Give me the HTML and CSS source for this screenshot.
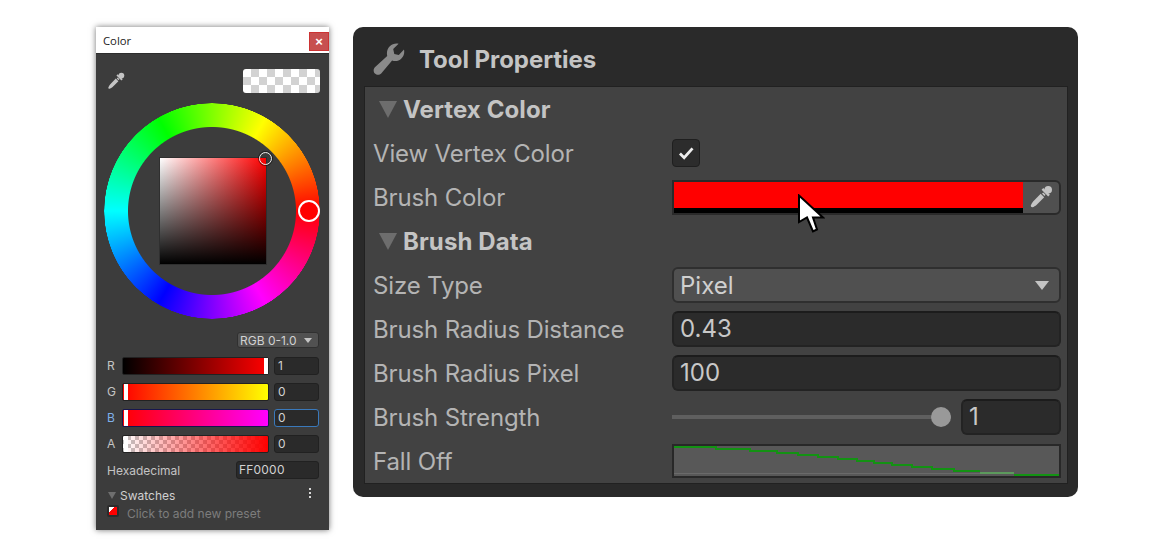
FILE: index.html
```html
<!DOCTYPE html>
<html lang="en">
<head>
<meta charset="utf-8">
<title>Color and Tool Properties</title>
<link rel="stylesheet" href="styles.css">
</head>
<body>
<svg class="defs" width="0" height="0" aria-hidden="true">
  <symbol id="dropper" viewBox="0 0 24 24">
    <circle cx="19.200" cy="4.800" r="3.800" fill="currentColor"/>
    <path d="M12.600 4.800l1.700-1.700 6.600 6.600-1.700 1.700z" fill="currentColor"/>
    <path d="M14.200 7.400l2.400 2.400-1.200 1.200-2.400-2.400z" fill="currentColor"/>
    <path d="M11.700 8.800l3.500 3.500-7.700 7.700c-1.100 1.100-2.600 1.800-4 2.300-.9.300-2-.8-1.700-1.700.5-1.400 1.200-2.900 2.300-4z" fill="currentColor"/>
  </symbol>
</svg>

<section class="win">
  <header class="win-title"><span>Color</span><button class="win-close">×</button></header>
  <div class="win-body">
    <div class="top">
      <svg class="dropper-s"><use href="#dropper"/></svg>
      <div class="preview"></div>
    </div>
    <div class="wheel-wrap">
      <div class="wheel"></div>
      <div class="sv"></div>
      <div class="thumb-sv"></div>
      <div class="thumb-hue"></div>
    </div>
    <div class="mode-row"><div class="mode"><span>RGB 0-1.0</span><i class="tri-s"></i></div></div>
    <div class="chan"><span class="chan-l">R</span><div class="bar bar-r"><i class="handle handle-end"></i></div><div class="num">1</div></div>
    <div class="chan"><span class="chan-l">G</span><div class="bar bar-g"><i class="handle"></i></div><div class="num">0</div></div>
    <div class="chan chan-on"><span class="chan-l">B</span><div class="bar bar-b"><i class="handle"></i></div><div class="num">0</div></div>
    <div class="chan"><span class="chan-l">A</span><div class="bar bar-a"><i class="handle"></i></div><div class="num">0</div></div>
    <div class="hex"><span>Hexadecimal</span><div class="num num-hex">FF0000</div></div>
    <div class="sw-head"><i class="tri-sw"></i><span>Swatches</span><b class="dots"><i></i><i></i><i></i></b></div>
    <div class="sw-row"><i class="swatch"></i><span>Click to add new preset</span></div>
  </div>
</section>

<section class="panel">
  <header class="panel-head">
    <svg class="wrench" viewBox="0 0 32 32"><path d="M31 6.500c.7 3.500-.2 6.700-2.600 9-2.500 2.500-5.900 3.200-9.300 2.100L8.200 30.600c-1.600 1.600-4.600 1.700-6.300 0-1.700-1.700-1.600-4.700 0-6.300L14.200 12.900C13.400 9.300 14.300 5.800 16.800 3.300 19.200 1 22.300.2 25.600.8l-5.400 5.300 1.100 4.900 4.500 1.100z" fill="currentColor"/></svg>
    <h1>Tool Properties</h1>
  </header>
  <div class="panel-body">
    <div class="row row-head"><i class="tri"></i><h2>Vertex Color</h2></div>
    <div class="row"><label>View Vertex Color</label>
      <div class="ctl"><div class="check"><svg viewBox="0 0 28 28"><path d="M7.500 14.500l4.500 4.500 9-10" fill="none" stroke="currentColor" stroke-width="3"/></svg></div></div></div>
    <div class="row"><label>Brush Color</label>
      <div class="ctl"><div class="colorf">
        <div class="colorf-main"><div class="colorf-red"></div><div class="colorf-black"></div></div>
        <div class="colorf-pick"><svg class="dropper-l"><use href="#dropper"/></svg></div>
        <svg class="cursor" viewBox="0 0 28 40"><path d="M2 1.500V28L10 23.500 16 37.500 20 35.500 16 23.500H26z" fill="#fff" stroke="#000" stroke-width="2"/></svg>
      </div></div></div>
    <div class="row row-head"><i class="tri"></i><h2>Brush Data</h2></div>
    <div class="row"><label>Size Type</label>
      <div class="ctl"><div class="select"><span>Pixel</span><i class="tri-sel"></i></div></div></div>
    <div class="row"><label>Brush Radius Distance</label><div class="ctl"><div class="field">0.43</div></div></div>
    <div class="row"><label>Brush Radius Pixel</label><div class="ctl"><div class="field">100</div></div></div>
    <div class="row"><label>Brush Strength</label>
      <div class="ctl ctl-slider"><div class="track"><i class="knob"></i></div><div class="field field-s">1</div></div></div>
    <div class="row"><label>Fall Off</label>
      <div class="ctl"><div class="curve">
        <svg viewBox="0 0 385 30">
          <path d="M0 27.500H306" fill="none" stroke="#6a6a6a" stroke-width="1"/>
          <path d="M0 1H42V3H76V5H103V7H124V9H144V11H164V13H183V15H200V17H218V19H238V21H258V23H280V25H306" fill="none" stroke="#139213" stroke-width="2" shape-rendering="crispEdges"/>
          <path d="M306 27H340" fill="none" stroke="#5c9a5c" stroke-width="2" shape-rendering="crispEdges"/>
          <path d="M340 29H385" fill="none" stroke="#139213" stroke-width="2" shape-rendering="crispEdges"/>
        </svg>
      </div></div></div>
  </div>
</section>
</body>
</html>
```

FILE: styles.css
```css
* { box-sizing: border-box; }
html, body { margin: 0; height: 100%; }
body {
  background: #fff;
  display: flex;
  align-items: flex-start;
  gap: 24px;
  padding: 27px 0 0 96px;
  font-family: Inter, "Liberation Sans", sans-serif;
  overflow: hidden;
}
.defs { display: block; width: 0; height: 0; margin-left: -24px; }

/* colour window */
.win {
  width: 233px;
  height: 503px;
  background: #3c3c3c;
  box-shadow: 0 0 6px rgba(0,0,0,.55);
  flex: none;
  display: flex;
  flex-direction: column;
}
.win-title {
  height: 27px;
  flex: none;
  background: #fff;
  border-bottom: 1px solid #2d2d2d;
  display: flex;
  justify-content: space-between;
  align-items: flex-start;
  padding-left: 7px;
  font: 11.300px/27px "Open Sans", sans-serif;
  color: #222;
}
.win-close {
  width: 20px;
  height: 19px;
  margin-top: 5px;
  padding: 0;
  border: 1px solid #c33;
  background: #c75050;
  color: #fff;
  font: 700 13px/16px "Liberation Sans", sans-serif;
}
.win-body {
  flex: 1;
  display: flex;
  flex-direction: column;
  padding: 15px 10px 0 11px;
  color: #c4c4c4;
  font-size: 12px;
}
.top {
  display: flex;
  justify-content: space-between;
  align-items: center;
  height: 24px;
}
.dropper-s { width: 18px; height: 18px; color: #c4c4c4; }
.preview {
  width: 77px;
  height: 24px;
  margin-right: -1px;
  border-radius: 3px;
  background: repeating-conic-gradient(#d2d2d2 0 25%, #fff 0 50%) 0 0 / 16px 16px;
}
.wheel-wrap {
  position: relative;
  width: 216px;
  height: 216px;
  margin: 10px 0 0 -3px;
  display: flex;
  align-items: center;
  justify-content: center;
}
.wheel {
  position: absolute;
  inset: 0;
  border-radius: 50%;
  background: conic-gradient(from 90deg, #f00, #f0f, #00f, #0ff, #0f0, #ff0, #f00);
  -webkit-mask: radial-gradient(circle, transparent 83.500px, #000 84.500px, #000 107.500px, transparent 108px);
  mask: radial-gradient(circle, transparent 83.500px, #000 84.500px, #000 107.500px, transparent 108px);
}
.sv {
  width: 106px;
  height: 106px;
  margin-left: 1px;
  background:
    linear-gradient(to top, #000, rgba(0,0,0,0)),
    linear-gradient(to right, #fff, #f00);
  box-shadow: 0 0 0 1px #2f2f2f;
}
.thumb-sv {
  position: absolute;
  left: 155px;
  top: 49px;
  width: 13px;
  height: 13px;
  border-radius: 50%;
  border: 1.500px solid #eee;
  box-shadow: 0 0 0 1px rgba(0,0,0,.5);
}
.thumb-hue {
  position: absolute;
  left: 194px;
  top: 97px;
  width: 22px;
  height: 22px;
  border-radius: 50%;
  border: 2px solid #fff;
  background: #f00;
}
.mode-row {
  display: flex;
  justify-content: flex-end;
  margin: 13px 0 0 0;
}
.mode {
  width: 82px;
  height: 16px;
  background: #515151;
  border: 1px solid #303030;
  border-radius: 3px;
  display: flex;
  align-items: center;
  justify-content: space-between;
  padding: 0 6px 0 2px;
  color: #d2d2d2;
  font-size: 12px;
}
.tri-s {
  border: 4px solid transparent;
  border-top: 5px solid #c4c4c4;
  border-bottom: 0;
}
.chan {
  display: flex;
  align-items: center;
  height: 18px;
  margin-top: 8px;
}
.mode-row + .chan { margin-top: 9px; }
.chan-l { width: 15px; font-size: 12px; margin-top: -1px; }
.bar {
  position: relative;
  width: 147px;
  height: 18px;
  border: 1px solid #222;
  border-radius: 2px;
}
.bar-r { background: linear-gradient(to right, #000, #f00); }
.bar-g { background: linear-gradient(to right, #f00, #ff0); }
.bar-b { background: linear-gradient(to right, #f00, #f0f); border-color: #16164e; }
.bar-a {
  background:
    linear-gradient(to right, rgba(255,0,0,0), #f00),
    repeating-conic-gradient(#c4c4c4 0 25%, #fff 0 50%) 0 0 / 8px 8px;
}
.handle {
  position: absolute;
  top: 0;
  bottom: 0;
  left: 1px;
  width: 4px;
  background: #fff;
}
.handle.handle-end { left: auto; right: 0; }
.num {
  width: 45px;
  height: 18px;
  margin-left: 5px;
  background: #2a2a2a;
  border: 1px solid #212121;
  border-radius: 3px;
  padding-left: 3px;
  line-height: 16px;
  color: #d2d2d2;
  font-size: 12px;
}
.chan-on .chan-l { color: #7fb0ea; }
.chan-on .num { border-color: #3a79bb; }
.hex {
  display: flex;
  justify-content: space-between;
  align-items: center;
  height: 18px;
  margin-top: 8px;
}
.num-hex { width: 83px; margin: 0; padding-left: 2px; letter-spacing: .2px; }
.sw-head {
  display: flex;
  align-items: center;
  height: 14px;
  margin-top: 9px;
  color: #d0d0d0;
}
.tri-sw {
  border: 4px solid transparent;
  border-top: 7px solid #6f6f6f;
  border-bottom: 0;
  margin: 1px 4px 0 1px;
}
.dots {
  margin-left: auto;
  margin-right: 8px;
  margin-top: -4px;
  display: flex;
  flex-direction: column;
  gap: 2px;
}
.dots i { width: 2px; height: 2px; background: #d8d8d8; display: block; }
.sw-row {
  display: flex;
  align-items: center;
  height: 14px;
  margin-top: 4px;
  color: #7d7d7d;
  font-size: 12px;
}
.swatch {
  width: 12px;
  height: 12px;
  flex: none;
  margin: -4px 8px 0 0;
  border: 2px solid #2c2c2c;
  border-radius: 2px;
  background: linear-gradient(135deg, #fff 0 32%, #f00 32%);
}

/* tool properties */
.panel {
  width: 725px;
  height: 470px;
  flex: none;
  background: #2a2a2a;
  border-radius: 10px;
  padding: 0 10px 13px 11px;
  display: flex;
  flex-direction: column;
  color: #bdbdbd;
}
.panel-head {
  height: 59px;
  flex: none;
  display: flex;
  align-items: center;
  padding: 4px 0 0 9px;
}
.wrench { width: 32px; height: 32px; color: #8a8a8a; flex: none; }
.panel-head h1 {
  margin: 2px 0 0 14px;
  font-size: 24px;
  font-weight: 700;
  letter-spacing: -.05px;
  color: #c4c4c4;
}
.panel-body {
  flex: 1;
  background: #424242;
  border: 1px solid #212121;
  padding: 0 7px 0 8px;
  display: flex;
  flex-direction: column;
}
.row {
  height: 44px;
  flex: none;
  display: flex;
  align-items: center;
  font-size: 24px;
}
.row label { width: 299px; flex: none; font-weight: 400; letter-spacing: -.15px; color: #b4b4b4; }
.row-head h2 { margin: 0; font-size: 24px; font-weight: 700; letter-spacing: .1px; color: #c4c4c4; }
.tri {
  width: 0;
  height: 0;
  margin: 0 6px 0 6px;
  border: 9px solid transparent;
  border-top: 17px solid #6d6d6d;
  border-bottom: 0;
}
.ctl { width: 389px; flex: none; }
.ctl-slider { display: flex; align-items: center; gap: 10px; }
.check {
  width: 28px;
  height: 28px;
  background: #2c2c2c;
  border: 1px solid #1f1f1f;
  border-radius: 4px;
  color: #eee;
  display: flex;
}
.check svg { width: 26px; height: 26px; }
.colorf {
  position: relative;
  display: flex;
  height: 35px;
  border: 2px solid #2a2a2a;
  border-radius: 0 6px 6px 0;
  background: #505050;
}
.colorf-main { width: 349px; display: flex; flex-direction: column; }
.colorf-red { height: 26px; background: #f00; }
.colorf-black { height: 5px; background: #000; }
.colorf-pick { flex: 1; display: flex; align-items: center; justify-content: center; }
.dropper-l { width: 24px; height: 24px; color: #c4c4c4; }
.cursor {
  position: absolute;
  left: 123px;
  top: 12px;
  width: 28px;
  height: 40px;
}
.select {
  height: 36px;
  background: #505050;
  border: 2px solid #2f2f2f;
  border-radius: 6px;
  display: flex;
  align-items: center;
  justify-content: space-between;
  padding: 0 10px 0 6px;
  color: #d0d0d0;
}
.tri-sel {
  border: 7.500px solid transparent;
  border-top: 9px solid #c4c4c4;
  border-bottom: 0;
}
.field {
  height: 36px;
  background: #2b2b2b;
  border: 2px solid #232323;
  border-top-color: #1c1c1c;
  border-radius: 6px;
  padding-left: 6px;
  line-height: 32px;
  color: #c8c8c8;
}
.field-s { width: 100px; flex: none; padding-left: 6px; }
.track {
  position: relative;
  flex: 1;
  height: 4px;
  background: #5f5f5f;
}
.knob {
  position: absolute;
  right: 0;
  top: -8px;
  width: 20px;
  height: 20px;
  border-radius: 50%;
  background: #999;
}
.curve {
  height: 34px;
  background: #585858;
  border: 2px solid #282828;
}
.curve svg { display: block; width: 100%; height: 100%; }
```
